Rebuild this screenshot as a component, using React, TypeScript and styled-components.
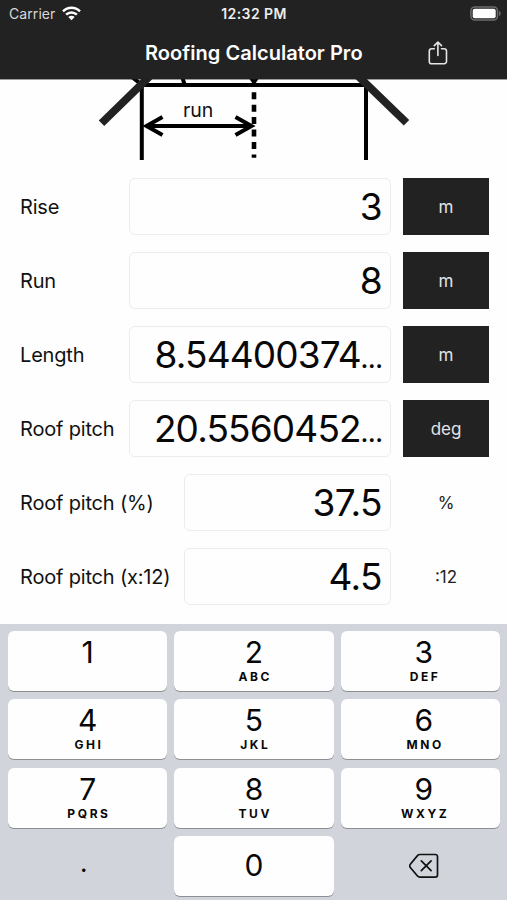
import React from "react";
import styled, { createGlobalStyle } from "styled-components";

const GlobalStyle = createGlobalStyle`
  * { box-sizing: border-box; }
  body { margin: 0; background: #fefefe; }
`;

const Screen = styled.div`
  width: 507px;
  height: 900px;
  overflow: hidden;
  display: flex;
  flex-direction: column;
  background: #fefefe;
  color: #111;
  font-family: Inter, "Liberation Sans", sans-serif;
`;

const Header = styled.header`
  height: 79px;
  flex: none;
  background: #222;
  color: #fff;
`;

const StatusBar = styled.div`
  height: 27px;
  padding: 0 6px 0 9px;
  display: grid;
  grid-template-columns: 1fr auto 1fr;
  align-items: center;
`;

const Carrier = styled.div`
  display: flex;
  align-items: center;
  gap: 7px;
  font-size: 14px;
  line-height: 26px;
  letter-spacing: 0.08px;
  color: #d8d8d8;
`;

const Clock = styled.div`
  margin-right: 2px;
  font-size: 14px;
  line-height: 27px;
  font-weight: 600;
  color: #eee;
  letter-spacing: 0.4px;
`;

const BatterySlot = styled.div`
  display: flex;
  justify-content: flex-end;
`;

const NavBar = styled.div`
  height: 52px;
  padding-right: 59px;
  display: grid;
  grid-template-columns: 145px 1fr auto;
  align-items: center;
`;

const Title = styled.h1`
  grid-column: 2;
  margin: 0;
  font-size: 20px;
  line-height: 51px;
  font-weight: 600;
  letter-spacing: 0.04px;
  white-space: nowrap;
`;

const ShareButton = styled.button`
  padding: 0;
  border: 0;
  background: none;
  display: flex;
`;

const Diagram = styled.svg`
  flex: none;
  display: block;
`;

const Form = styled.main`
  height: 464px;
  flex: none;
  padding: 18px 18px 0 20px;
  display: flex;
  flex-direction: column;
  gap: 18px;
`;

const Row = styled.label`
  height: 56px;
  flex: none;
  display: flex;
  align-items: center;
`;

const Label = styled.span`
  flex: 1;
  padding-top: 2px;
  font-size: 20px;
  letter-spacing: -0.18px;
  line-height: 56px;
  white-space: nowrap;
`;

const Value = styled.div<{ $narrow?: boolean; $tight?: boolean }>`
  width: ${(p) => (p.$narrow ? 207 : 262)}px;
  height: 57px;
  margin: 1px 12px 0 0;
  padding-right: 8px;
  border: 1px solid #ececec;
  border-radius: 6px;
  font-size: 37px;
  line-height: 56px;
  letter-spacing: ${(p) => (p.$tight ? -0.85 : -0.6)}px;
  text-align: right;
  white-space: nowrap;
  color: #080808;
`;

const Ellipsis = styled.span`
  font-size: 22px;
  font-weight: 700;
  letter-spacing: -0.8px;
`;

const Unit = styled.div<{ $button?: boolean }>`
  width: 86px;
  height: 57px;
  margin-top: 1px;
  font-size: 17px;
  line-height: 58px;
  text-align: center;
  background: ${(p) => (p.$button ? "#222" : "transparent")};
  color: ${(p) => (p.$button ? "#e4e4e4" : "#222")};
`;

const Keypad = styled.section`
  height: 276px;
  flex: none;
  padding: 7px 7px 0 8px;
  display: grid;
  grid-template-columns: repeat(3, 1fr);
  grid-auto-rows: 60px;
  gap: 8.45px 7px;
  background: #d1d4db;
`;

const Key = styled.button<{ $plain?: boolean; $centered?: boolean }>`
  border: 0;
  padding: ${(p) => (p.$centered ? "0 0 1px" : "4px 0 0")};
  border-radius: 6px;
  display: flex;
  flex-direction: column;
  align-items: center;
  justify-content: ${(p) => (p.$centered ? "center" : "flex-start")};
  background: ${(p) => (p.$plain ? "transparent" : "#fefefe")};
  box-shadow: ${(p) => (p.$plain ? "none" : "0 1px 0 #8d8f93")};
  color: #080808;
  font-family: inherit;

  &:nth-child(3n) {
    padding-left: 7px;
  }
`;

const Digit = styled.span`
  font-size: 30px;
  line-height: 35px;
`;

const Letters = styled.span`
  margin-right: -2.6px;
  font-size: 12px;
  line-height: 14px;
  font-weight: 700;
  letter-spacing: 2.6px;
`;

const Point = styled.span`
  margin: -6px 8px 0 0;
  font-size: 26px;
  line-height: 32px;
`;

const fields = [
  { label: "Rise", value: "3", unit: "m", button: true },
  { label: "Run", value: "8", unit: "m", button: true },
  { label: "Length", value: "8.54400374", cut: true, unit: "m", button: true },
  { label: "Roof pitch", value: "20.5560452", cut: true, unit: "deg", button: true },
  { label: "Roof pitch (%)", value: "37.5", unit: "%", button: false },
  { label: "Roof pitch (x:12)", value: "4.5", unit: ":12", button: false },
];

const keys = [
  ["1", ""],
  ["2", "ABC"],
  ["3", "DEF"],
  ["4", "GHI"],
  ["5", "JKL"],
  ["6", "MNO"],
  ["7", "PQRS"],
  ["8", "TUV"],
  ["9", "WXYZ"],
];

const WifiIcon = () => (
  <svg width="19" height="15" viewBox="0 0 19 15" fill="none" stroke="#fff" strokeWidth="2.5">
    <path d="M1 5.4C5.8.6 13.2.6 18 5.4" />
    <path d="M4.1 8.7c3.1-3 7.7-3 10.8 0" />
    <path d="M9.5 14.3 6.3 11.1c1.9-1.7 4.5-1.7 6.4 0z" fill="#fff" stroke="none" />
  </svg>
);

const BatteryIcon = () => (
  <svg width="31" height="15" viewBox="0 0 31 15">
    <rect x="0.9" y="0.9" width="26.6" height="13.2" rx="4" fill="none" stroke="#6c6c6c" strokeWidth="1.5" />
    <rect x="2.7" y="2.7" width="23" height="9.6" rx="2" fill="#fff" />
    <path d="M29 5v5c2.2-.8 2.2-4.2 0-5z" fill="#6c6c6c" />
  </svg>
);

const ShareIcon = () => (
  <svg width="20" height="25" viewBox="0 0 20 25" fill="none" stroke="#e6e6e6" strokeWidth="1.6" strokeLinecap="round" strokeLinejoin="round">
    <path d="M6.3 7.7H3.6A2.3 2.3 0 0 0 1.3 10v10.4a2.3 2.3 0 0 0 2.3 2.3h12.6a2.3 2.3 0 0 0 2.3-2.3V10a2.3 2.3 0 0 0-2.3-2.3h-2.7" />
    <path d="M9.9 14.5V1.2M6.3 4.6l3.6-3.5 3.6 3.5" />
  </svg>
);

const DeleteIcon = () => (
  <svg width="30" height="26" viewBox="0 0 30 26" fill="none" stroke="#111" strokeWidth="1.7" strokeLinecap="round" strokeLinejoin="round">
    <path d="M10.8 1.5h15.5a2.2 2.2 0 0 1 2.2 2.2v18.2a2.2 2.2 0 0 1-2.2 2.2H10.8a3 3 0 0 1-2.1-.9L1.5 14.7a2.6 2.6 0 0 1 0-3.700L8.7 2.4a3 3 0 0 1 2.1-.9z" />
    <path d="m12.3 7.9 9.8 9.8M22.1 7.9l-9.8 9.8" />
  </svg>
);

const RoofDiagram = () => (
  <Diagram width="507" height="81" viewBox="0 79 507 81" fill="none" stroke="#000" strokeWidth="4">
    <path d="M132 77l10 8M182.5 75q.2 5 2 9M250.5 77l3.5 5 3.5-5z" />
    <path d="M140 85H368M141.8 83v77M366 83v77" />
    <path d="M254 92.2v65.5" strokeWidth="4.6" strokeDasharray="7 5.45" />
    <path d="M101.500 123.3 152 74M406.500 122.7 356 74" stroke="#222" strokeWidth="7.8" />
    <path d="M146 126H252M162.5 117 146.5 126l16 9M235.5 117l16 9-16 9" />
    <text x="183" y="116.700" fontSize="19.500" letterSpacing="-0.1" fill="#111" stroke="none">
      run
    </text>
    <path d="M0 79.5h507" stroke="#222" strokeOpacity="0.45" strokeWidth="1" />
  </Diagram>
);

export default function App() {
  return (
    <Screen>
      <GlobalStyle />
      <Header>
        <StatusBar>
          <Carrier>
            Carrier <WifiIcon />
          </Carrier>
          <Clock>12:32 PM</Clock>
          <BatterySlot>
            <BatteryIcon />
          </BatterySlot>
        </StatusBar>
        <NavBar>
          <Title>Roofing Calculator Pro</Title>
          <ShareButton aria-label="Share">
            <ShareIcon />
          </ShareButton>
        </NavBar>
      </Header>
      <RoofDiagram />
      <Form>
        {fields.map((f) => (
          <Row key={f.label}>
            <Label>{f.label}</Label>
            <Value $narrow={!f.button} $tight={f.cut}>
              {f.value}
              {f.cut && <Ellipsis>…</Ellipsis>}
            </Value>
            <Unit $button={f.button}>{f.unit}</Unit>
          </Row>
        ))}
      </Form>
      <Keypad>
        {keys.map(([digit, letters]) => (
          <Key key={digit}>
            <Digit>{digit}</Digit>
            <Letters>{letters}</Letters>
          </Key>
        ))}
        <Key $plain $centered>
          <Point>.</Point>
        </Key>
        <Key $centered>
          <Digit>0</Digit>
        </Key>
        <Key $plain $centered aria-label="Delete">
          <DeleteIcon />
        </Key>
      </Keypad>
    </Screen>
  );
}
